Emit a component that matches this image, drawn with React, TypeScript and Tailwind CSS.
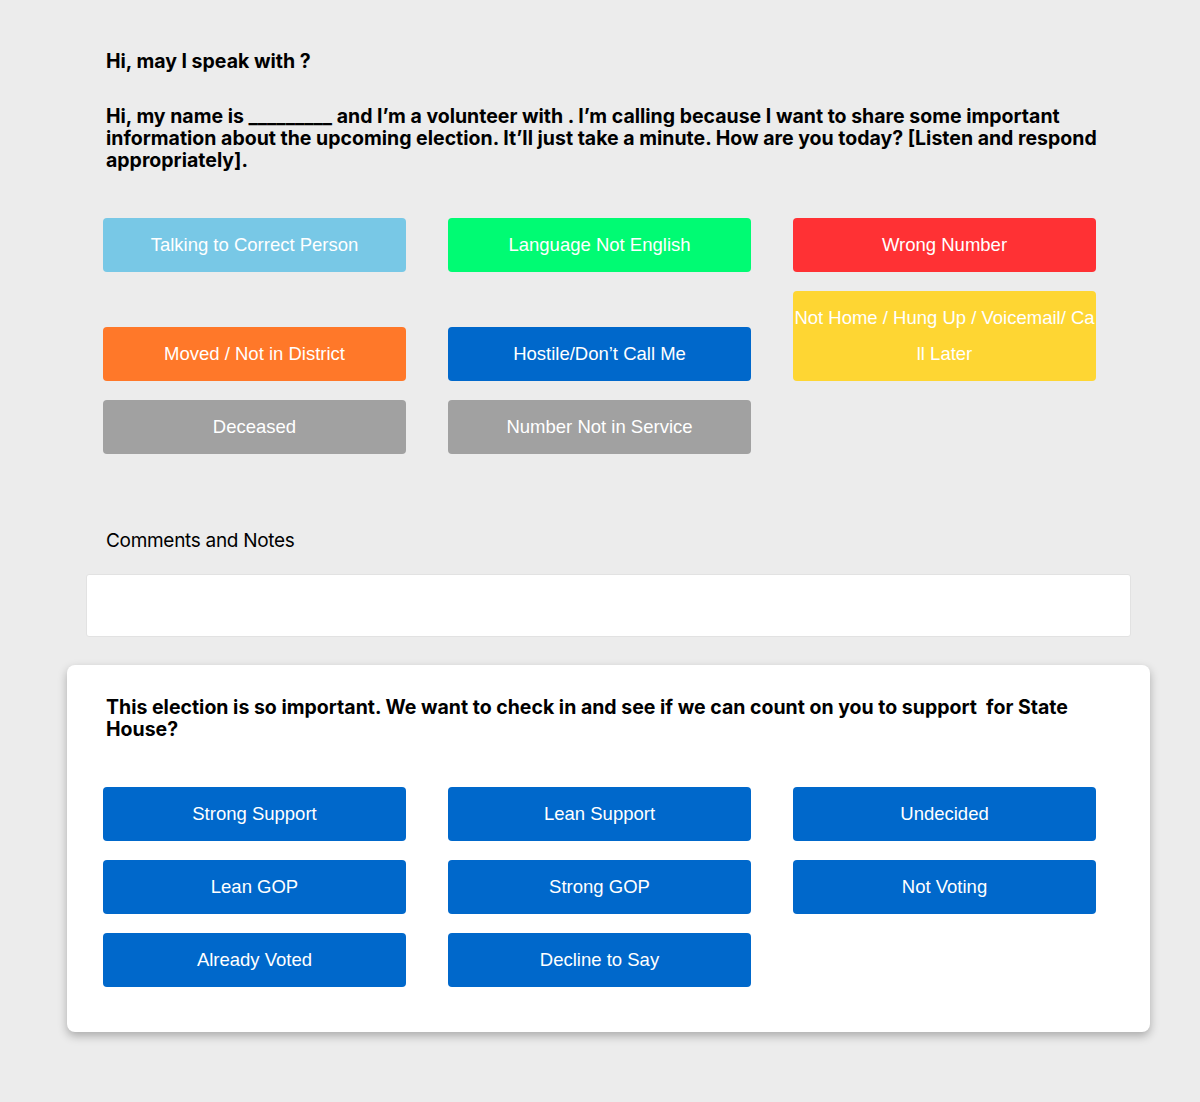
import React from "react";

type Btn = { label: string; color: string };

const dispositionRows: Btn[][] = [
  [
    { label: "Talking to Correct Person", color: "bg-[#78c8e6]" },
    { label: "Language Not English", color: "bg-[#00fb73]" },
    { label: "Wrong Number", color: "bg-[#ff3134]" },
  ],
  [
    { label: "Moved / Not in District", color: "bg-[#ff7829]" },
    { label: "Hostile/Don’t Call Me", color: "bg-[#0068cb]" },
    { label: "Not Home / Hung Up / Voicemail/ Call Later", color: "bg-[#fed633]" },
  ],
  [
    { label: "Deceased", color: "bg-[#a1a1a1]" },
    { label: "Number Not in Service", color: "bg-[#a1a1a1]" },
  ],
];

const supportRows: Btn[][] = [
  [
    { label: "Strong Support", color: "bg-[#0068cb]" },
    { label: "Lean Support", color: "bg-[#0068cb]" },
    { label: "Undecided", color: "bg-[#0068cb]" },
  ],
  [
    { label: "Lean GOP", color: "bg-[#0068cb]" },
    { label: "Strong GOP", color: "bg-[#0068cb]" },
    { label: "Not Voting", color: "bg-[#0068cb]" },
  ],
  [
    { label: "Already Voted", color: "bg-[#0068cb]" },
    { label: "Decline to Say", color: "bg-[#0068cb]" },
  ],
];

// rows keep the last baseline aligned, so a wrapped label grows upward
function ButtonGrid({ rows }: { rows: Btn[][] }) {
  return (
    <div className="flex flex-col gap-[19px] w-[993px]">
      {rows.map((row, i) => (
        <div key={i} className="flex items-end gap-[42px]">
          {row.map((b) => (
            <button
              key={b.label}
              className={`${b.color} w-[303px] shrink-0 rounded-[4px] py-[9px] text-white text-[18.5px] leading-[36px] text-center break-all font-['Liberation_Sans',Arial,sans-serif]`}
            >
              {b.label}
            </button>
          ))}
        </div>
      ))}
    </div>
  );
}

export default function App() {
  return (
    <div className="min-h-[1102px] w-[1200px] bg-[#ececec] pt-[50px] font-['Inter',sans-serif] text-black">
      <div className="pl-[106px] pr-[100px]">
        <h1 className="text-[19.5px] leading-[22px] font-bold">Hi, may I speak with ?</h1>
        <p className="mt-[33px] text-[19.5px] leading-[22px] font-bold">
          Hi, my name is _________ and I’m a volunteer with . I’m calling because I want to share some important
          information about the upcoming election. It’ll just take a minute. How are you today? [Listen and respond
          appropriately].
        </p>
      </div>

      <div className="mt-[47px] ml-[103px]">
        <ButtonGrid rows={dispositionRows} />
      </div>

      <div className="mt-[76px] pl-[106px] text-[19px] leading-[22px] tracking-[-0.3px]">Comments and Notes</div>
      <div className="mt-[22px] ml-[86px] w-[1045px] h-[63px] bg-white rounded-[3px] border border-[#e2e2e2]" />

      <div className="mt-[28px] ml-[67px] w-[1083px] rounded-[8px] bg-white px-[36px] pt-[31px] pb-[45px] shadow-[0_4px_10px_rgba(0,0,0,0.28)]">
        <h2 className="px-[3px] text-[19.5px] leading-[22px] font-bold">
          This election is so important. We want to check in and see if we can count on you to support&nbsp; for State
          House?
        </h2>
        <div className="mt-[47px]">
          <ButtonGrid rows={supportRows} />
        </div>
      </div>
    </div>
  );
}
